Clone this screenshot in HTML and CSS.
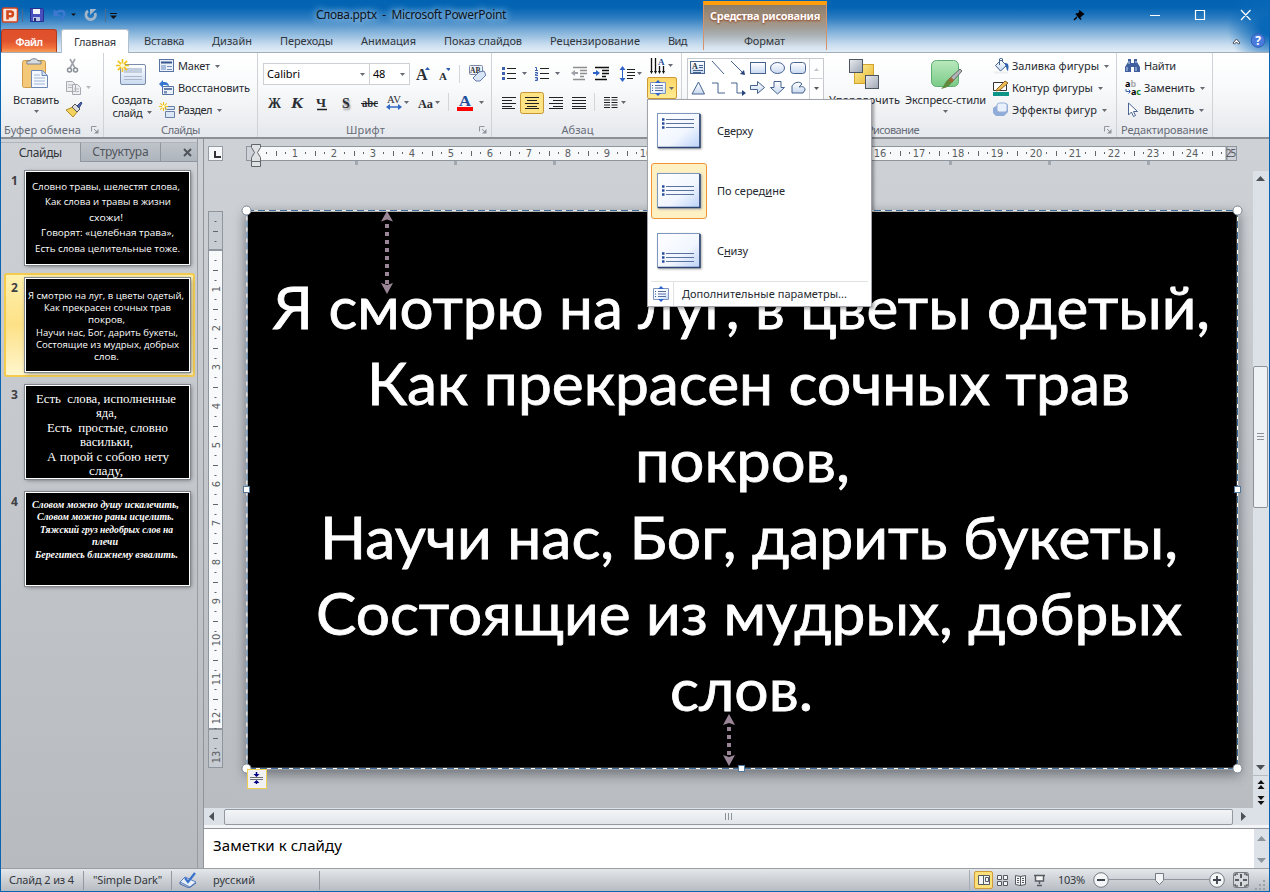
FILE: index.html
```html
<!DOCTYPE html>
<html lang="ru">
<head>
<meta charset="utf-8">
<title>Слова.pptx - Microsoft PowerPoint</title>
<link rel="stylesheet" href="styles.css">
</head>
<body>
<svg class="defs" width="0" height="0">
  <defs>
    <linearGradient id="page" x1="0" y1="0" x2="1" y2="1"><stop offset="0" stop-color="#fff"/><stop offset=".6" stop-color="#f1f6ff"/><stop offset="1" stop-color="#bcd2f8"/></linearGradient>
    <linearGradient id="blue" x1="0" y1="0" x2="0" y2="1"><stop offset="0" stop-color="#fff"/><stop offset="1" stop-color="#c9d9f0"/></linearGradient>
    <linearGradient id="gold" x1="0" y1="0" x2="1" y2="1"><stop offset="0" stop-color="#fff0a0"/><stop offset="1" stop-color="#e5b52b"/></linearGradient>
    <linearGradient id="green" x1="0" y1="0" x2="0" y2="1"><stop offset="0" stop-color="#b9e8bd"/><stop offset="1" stop-color="#7acb88"/></linearGradient>
    <linearGradient id="steel" x1="0" y1="0" x2="1" y2="1"><stop offset="0" stop-color="#e9ebee"/><stop offset="1" stop-color="#9da6b5"/></linearGradient>
    <symbol id="down" viewBox="0 0 5 3"><path d="M0 0h5L2.500 3z" fill="#666b72"/></symbol>
    <symbol id="launch" viewBox="0 0 8 8"><path d="M.5 5.500V.5H5.500M3 3l3 3" fill="none" stroke="#8f969e"/><path d="M7.500 3v4.500H3z" fill="#8f969e"/></symbol>
    <symbol id="spark" viewBox="0 0 14 14"><path d="M7 0v14M0 7h14M2 2l10 10M12 2L2 12" stroke="#f2c21a" stroke-width="1.700"/><circle cx="7" cy="7" r="2.500" fill="#fffbd2"/></symbol>
    <symbol id="valign" viewBox="0 0 16 16"><path d="M.5 2.500h15v11H.5z" fill="url(#page)" stroke="#7f97c0"/><path d="M5 5.500h8M5 8h8M5 10.500h8" stroke="#5a6f9c"/><path d="M2 5.500h1M2 8h1M2 10.500h1" stroke="#2c52a8"/><path d="M8 0l3 3H5zM8 16l3-3H5z" fill="#2c63cf"/></symbol>
  </defs>
</svg>
<div class="window">

  <header class="titlebar">
    <div class="quick">
      <svg width="120" height="20" viewBox="0 5 120 20">
        <rect x="2.500" y="8" width="15" height="14" rx="1.500" fill="#fbe4dc" stroke="#d0441c" stroke-width="1.500"/><path d="M7.500 19.500V11.500h3a2.300 2.300 0 0 1 0 4.800H8" fill="none" stroke="#d1481d" stroke-width="2.600"/>
        <path d="M22.500 9v13M105.500 9v13" stroke="#4d6c8f"/>
        <path d="M30.500 8.500h12l1 1V21.500H30.500z" fill="#4a4fc0" stroke="#26308e"/><path d="M33 9h7v5h-7z" fill="#f3f5fb"/><path d="M33 17h7v4h-7z" fill="#b9c3e5"/><path d="M34 18h2v3h-2z" fill="#222a70"/>
        <path d="M54.500 10v5.500h5.500M55 15c2.500-5 9-5.500 9.500-1 0 2.500-2 4-4 6" fill="none" stroke="#3f78d2" stroke-width="2.200"/>
        <path d="M71 13.500h5L73.500 16z" fill="#111"/>
        <path d="M88 11a4.700 4.700 0 1 0 7 2" fill="none" stroke="#a3b6ca" stroke-width="2.800"/><path d="M90 15V9h6.500z" fill="#a3b6ca"/>
        <path d="M110 13.500h7" stroke="#111"/><path d="M110 15.500h7l-3.500 3.500z" fill="#111"/>
      </svg>
    </div>
    <h1 class="doc" data-w="190">Слова.pptx&nbsp; -&nbsp; Microsoft PowerPoint</h1>
    <svg class="winbtns" width="190" height="24" viewBox="1070 3 190 24">
      <path d="M1074 20l3-3M1076 13.500l5 6M1077 14.500l3.500-2.500 2 2.500-2.500 2.500zM1079 10.500l5 4" stroke="#000" stroke-width="1.500" fill="#000"/>
      <path d="M1150 15.500h10M1195.500 10.500h9v9h-9zM1241 10l9.500 10M1250.500 10l-9.500 10" stroke="#fff" stroke-width="1.200" fill="none"/>
    </svg>
  </header>

  <nav class="tabs">
    <span class="tab file"><b data-w="27">Файл</b></span>
    <span class="tab home"><b data-w="42">Главная</b></span>
    <b data-w="40">Вставка</b><b data-w="40">Дизайн</b><b data-w="53">Переходы</b><b data-w="55">Анимация</b><b data-w="78">Показ слайдов</b><b data-w="90">Рецензирование</b><b data-w="19">Вид</b>
    <span class="format"><b data-w="41">Формат</b></span>
    <svg class="help" width="36" height="18" viewBox="1231 32 36 18">
      <path d="M1233 43l3.500-4 3.500 4-1.500 1-2-2-2 2z" fill="#fff" stroke="#444c57"/>
      <circle cx="1258" cy="40.500" r="6.800" fill="#4a7bdc" stroke="#2f5fb8"/><text x="1258" y="45" text-anchor="middle" class="q">?</text>
    </svg>
  </nav>
  <div class="context"><span data-w="110">Средства рисования</span></div>

  <section class="ribbon">
    <div class="group clip">
      <div class="body">
        <div class="big paste">
          <svg width="30" height="32" viewBox="22 58 30 32"><rect x="23.500" y="60.500" width="23" height="27" rx="2" fill="#f3c878" stroke="#d09a48"/><path d="M28 64v-3h3c0-3 8-3 8 0h3v3z" fill="#d9dde3" stroke="#77808d"/><path d="M32.500 70.500h11l5 5v12h-16z" fill="#f5f9ff" stroke="#6d88b2"/><path d="M43 70.500v5h5" fill="#cfdff5" stroke="#6d88b2"/><path d="M35 75h6M35 78h11M35 81h11M35 84h11" stroke="#9fb4d6"/></svg>
          <span data-w="46">Вставить</span>
          <svg width="5" height="3"><use href="#down"/></svg>
        </div>
        <div class="col icons">
          <svg width="20" height="16" viewBox="0 0 20 16"><path d="M4 1l5 9M9 1L4 10" stroke="#a0a4aa" stroke-width="1.600"/><circle cx="3.500" cy="12" r="2" fill="none" stroke="#8a9098" stroke-width="1.500"/><circle cx="9.500" cy="12" r="2" fill="none" stroke="#8a9098" stroke-width="1.500"/></svg>
          <svg width="26" height="16" viewBox="0 0 26 16"><path d="M.5 1.500h6l3 3v7h-9zM6.500 4.500h5l3 3v7h-8z" fill="#eceef0" stroke="#a7abb1"/><path d="M2 5h4M2 7.500h4M8 9h5M8 11.500h5" stroke="#b5b9be"/><path d="M20 6h5l-2.500 3z" fill="#b7babf"/></svg>
          <svg width="20" height="16" viewBox="0 0 20 16"><path d="M0 8l7-3 5 4-5 6z" fill="#f1d35e" stroke="#b38b24"/><path d="M6 5l3-3 5 5-3 3z" fill="#ddd" stroke="#555"/><path d="M11 4l4-4 1 1-3 5z" fill="#4b64aa" stroke="#334883"/></svg>
        </div>
      </div>
      <div class="caption"><span data-w="77">Буфер обмена</span><svg width="8" height="8"><use href="#launch"/></svg></div>
    </div>

    <div class="group slides">
      <div class="body">
        <div class="big newslide">
          <svg width="32" height="30" viewBox="115 59 32 30"><rect x="119.500" y="65.500" width="25" height="20" rx="1.500" fill="url(#blue)" stroke="#7a8ca8"/><path d="M123 69h18v5h-18z" fill="#c2cede"/><path d="M123 77.500h18M123 80.500h18" stroke="#aab7ca"/><use href="#spark" x="115" y="60" width="13" height="13"/></svg>
          <span data-w="41">Создать</span>
          <span class="inline"><span data-w="30">слайд</span><svg width="5" height="3"><use href="#down"/></svg></span>
        </div>
        <div class="col rows">
          <div><svg width="16" height="16"><rect x=".5" y="1.500" width="14" height="12" fill="#eaf1fb" stroke="#5673a2"/><path d="M2 4.500h11" stroke="#38568d" stroke-width="2"/><path d="M2 7h5v5H2z" fill="#a8bddc"/><path d="M8 8.500h5M8 11.500h5" stroke="#7890b5"/></svg><span data-w="32">Макет</span><svg class="dd" width="5" height="3"><use href="#down"/></svg></div>
          <div><svg width="16" height="16"><path d="M3.500 6.500h11v8h-11z" fill="#eaf1fb" stroke="#5673a2"/><path d="M5 9h8" stroke="#38568d" stroke-width="1.500"/><path d="M5 11h3v2.500H5z" fill="#7890b5"/><path d="M0 4l4-4v2c5 0 6 2 6 5-1-2-3-2-6-2v3z" fill="#3676cf"/></svg><span data-w="72">Восстановить</span></div>
          <div><svg width="16" height="16"><path d="M6.500 4.500h9v3h-9zM6.500 9.500h9v6h-9z" fill="#dce7f6" stroke="#6981a9"/><use href="#spark" width="9" height="9"/></svg><span data-w="34">Раздел</span><svg class="dd" width="5" height="3"><use href="#down"/></svg></div>
        </div>
      </div>
      <div class="caption"><span data-w="39">Слайды</span></div>
    </div>

    <div class="group font">
      <div class="body stack">
        <div class="fontrow1">
          <div class="combo"><span data-w="33">Calibri</span><svg width="5" height="3"><use href="#down"/></svg></div>
          <div class="combo size"><span data-w="12">48</span><svg width="5" height="3"><use href="#down"/></svg></div>
          <svg width="36" height="22" viewBox="413 63 36 22"><text x="415" y="80" class="ser" font-size="16">A</text><path d="M424 70h5l-2.500-3zM445 68h5l-2.500 3z" fill="#2c5bb4"/><text x="438" y="80" class="ser" font-size="11">A</text></svg>
          <i class="rule"></i>
          <svg width="18" height="18" viewBox="467 66 18 18"><rect x="468.500" y="66.500" width="13" height="9" rx="1" fill="#eef3fb" stroke="#7888a5"/><text x="469" y="74" class="ser" font-size="7.500">AB</text><path d="M472 79l6-6 5-1 2 4-6 6h-4z" fill="#d8e5f7" stroke="#637bab"/></svg>
        </div>
        <svg class="fontrow2" width="224" height="24" viewBox="263 92 224 24">
          <text x="268" y="108" class="ser" font-size="14" textLength="13">Ж</text>
          <text x="291" y="108" class="ser it" font-size="14" textLength="12">К</text>
          <text x="316" y="107" class="ser" font-size="13" textLength="10">Ч</text><path d="M317 109.500h10" stroke="#222" stroke-width="1.500"/>
          <text x="342" y="108" class="ser shade" font-size="14">S</text>
          <text x="362" y="107" class="ser" font-size="12" textLength="16">abc</text><path d="M361 103.500h17" stroke="#222"/>
          <text x="387" y="103" class="ser thin" font-size="11" textLength="14">AV</text><path d="M388 107h13" stroke="#316ac5" stroke-width="1.500"/><path d="M386 107l4-3v6zM402 107l-4-3v6z" fill="#316ac5"/><use href="#down" x="404" y="101" width="5" height="3"/>
          <text x="418" y="108" class="ser" font-size="13" textLength="15">Aa</text><use href="#down" x="435" y="101" width="5" height="3"/>
          <path d="M448.500 93v18" stroke="#d3d6da"/>
          <text x="459" y="106" class="ser bluea" font-size="15" textLength="12">A</text><path d="M457 107h16v4h-16z" fill="#f00"/><use href="#down" x="479" y="101" width="5" height="3"/>
        </svg>
      </div>
      <div class="caption"><span data-w="39">Шрифт</span><svg width="8" height="8"><use href="#launch"/></svg></div>
    </div>

    <div class="group para">
      <div class="body">
        <div class="stack">
          <svg class="parow1" width="146" height="24" viewBox="498 62 146 24">
            <path d="M507 68.500h9M507 73.500h9M507 78.500h9M540 68.500h9M540 73.500h9M540 78.500h9" stroke="#222"/>
            <path d="M502 67h3v3h-3zM502 72h3v3h-3zM502 77h3v3h-3z" fill="#3c62b0"/><path d="M535 67.500h1.500v3M535 70.500h3M535 72.500h2.500v1.500h-2v1.500h2.500M535 77.500h2.500v3H535M535.500 79h2" fill="none" stroke="#3c62b0"/>
            <use href="#down" x="522" y="72" width="5" height="3"/><use href="#down" x="555" y="72" width="5" height="3"/>
            <path d="M573 67.500h14M580 70.500h7M580 73.500h7M580 76.500h4M573 79.500h12" stroke="#8f8f8f" stroke-width="1.400"/><path d="M571 73l4-3v2h3v2h-3v2z" fill="#9da1a7"/>
            <path d="M595 67.500h14M602 70.500h7M602 73.500h7M602 76.500h4M595 79.500h12" stroke="#111" stroke-width="1.400"/><path d="M600 73l-4-3v2h-3v2h3v2z" fill="#2d63c8"/>
            <path d="M627 69.500h8M627 72.500h8M627 75.500h8M627 78.500h6" stroke="#222"/><path d="M622.500 68v12" stroke="#2d63c8"/><path d="M619.500 70l3-4 3 4zM619.500 78l3 4 3-4z" fill="#2d63c8"/><use href="#down" x="637" y="72" width="5" height="3"/>
          </svg>
          <svg class="parow2" width="132" height="24" viewBox="498 91 132 24">
            <rect x="520.500" y="92.500" width="23" height="21" rx="2" fill="#fde383" stroke="#c79733"/>
            <path d="M502 97.500h14M502 100.500h10M502 103.500h14M502 106.500h10M502 108.500h13M525 97.500h14M527 100.500h10M525 103.500h14M527 106.500h10M525 108.500h14M549 97.500h14M553 100.500h10M549 103.500h14M553 106.500h10M549 108.500h14M572 97.500h14M572 100.500h14M572 103.500h14M572 106.500h14M572 108.500h14" stroke="#222"/>
            <path d="M594.500 93v18" stroke="#d3d6da"/>
            <path d="M604 97.500h6M604 100h6M604 102.500h6M604 105h6M604 107.500h6M611.500 97.500h6M611.500 100h6M611.500 102.500h6M611.500 105h6M611.500 107.500h6" stroke="#222"/><use href="#down" x="621" y="101" width="5" height="3"/>
          </svg>
        </div>
        <div class="dircol">
          <svg width="30" height="22" viewBox="647 55 30 22"><path d="M651.500 58v14M655.500 58v14M659.500 66v6M663.500 66v6" stroke="#111" stroke-width="1.300"/><path d="M650 71h3l-1.500 3zM654 71h3l-1.500 3zM658 71h3l-1.500 3zM662 71h3l-1.500 3z" fill="#111"/><text x="658" y="65" class="ser bluea" font-size="9">A</text><use href="#down" x="668" y="64" width="5" height="3"/></svg>
          <div class="hot"><svg width="16" height="16"><use href="#valign"/></svg><svg width="5" height="3"><use href="#down"/></svg></div>
        </div>
      </div>
      <div class="caption"><span data-w="32">Абзац</span></div>
    </div>

    <div class="group draw">
      <div class="body">
        <svg class="gallery" width="138" height="42" viewBox="687 58 138 42">
          <rect x="687.500" y="58.500" width="136" height="45" fill="#fff" stroke="#c5c9ce"/>
          <path d="M809.500 59v41M809 78.500h15" stroke="#d0d4d8"/><path d="M814 71h5l-2.500-3z" fill="#c3c6ca"/><path d="M814 87h5l-2.500 3z" fill="#555"/>
          <g fill="url(#blue)" stroke="#46628f"><rect x="690.500" y="61.500" width="14" height="12"/><rect x="750.500" y="62.500" width="15" height="11"/><ellipse cx="777.500" cy="68" rx="7" ry="5.500"/><rect x="790.500" y="62.500" width="15" height="11" rx="3"/><path d="M698.500 82l6 12h-12.500z"/><path d="M750.500 85.500h7v-4l7 6-7 6v-4h-7z"/><path d="M774 81.500h7v6h3.500l-7 6.500-7-6.500h3.500z"/><path d="M792 93v-7c2-4 8-5 10-2l-3 3c4-1 6 0 6 3l-2 3z"/></g>
          <path d="M699 65.500h4M699 67.500h4M693 70.500h10M693 72.500h8M712 61l12 13M731 61l12 12M712 83h6v10h7M731 83h6v10h6" fill="none" stroke="#46628f"/><path d="M745 75l-5-1 4-4zM746 93l-4-3v6z" fill="#28457c"/><text x="692" y="69" class="ser" font-size="8">A</text>
        </svg>
        <div class="big arrange">
          <svg width="32" height="32" viewBox="849 57 32 32"><rect x="854.500" y="63.500" width="19" height="19" fill="url(#gold)" stroke="#d0a32d"/><rect x="849.500" y="58.500" width="13" height="13" fill="url(#steel)" stroke="#4d5563"/><rect x="865.500" y="74.500" width="13" height="13" fill="url(#steel)" stroke="#4d5563"/></svg>
          <span data-w="71">Упорядочить</span>
        </div>
        <div class="big styles">
          <svg width="32" height="32" viewBox="931 57 32 32"><rect x="932.500" y="59.500" width="27" height="26" rx="5" fill="url(#green)" stroke="#5cae70"/><path d="M961 68l2 2-10 11-3-3z" fill="#b2b5ba" stroke="#666"/><path d="M950 78l3 3c-2 4-6 6-11 7 4-4 4-8 8-10z" fill="#5f8a3d"/><path d="M949 79l4 3 2-3-3-3z" fill="#9b6a36"/></svg>
          <span data-w="81">Экспресс-стили</span>
          <svg width="5" height="3"><use href="#down"/></svg>
        </div>
        <div class="col rows">
          <div><svg width="16" height="16"><path d="M2.500 7.500L8 2l5.500 5.500-6 5.500z" fill="url(#blue)" stroke="#42618f"/><path d="M6.500 7V1c0-1 3-1 3 0v3" fill="none" stroke="#42618f"/><path d="M12 5c4 0 4 3 3 8-2-1-1-4-3-6z" fill="#2d60ad"/><path d="M1 13.500h14v2H1z" fill="#eee"/></svg><span data-w="87">Заливка фигуры</span><svg class="dd" width="5" height="3"><use href="#down"/></svg></div>
          <div><svg width="16" height="16"><path d="M.5 2.500h13v8H.5z" fill="#fff" stroke="#333"/><path d="M4 9l8-8 3 2-8 7-4 1z" fill="#eebd54" stroke="#8d6229"/><path d="M0 12h16v4H0z" fill="#0c9488"/></svg><span data-w="81">Контур фигуры</span><svg class="dd" width="5" height="3"><use href="#down"/></svg></div>
          <div><svg width="16" height="16"><path d="M3 4l3-3h7l2 2v7l-4 4H3l-3-3V6z" fill="#8fabd9"/><rect x="4" y="1" width="10" height="9" rx="2.500" fill="#e8f0fc" stroke="#9bb1d6"/></svg><span data-w="85">Эффекты фигур</span><svg class="dd" width="5" height="3"><use href="#down"/></svg></div>
        </div>
      </div>
      <div class="caption"><span data-w="52">Рисование</span><svg width="8" height="8"><use href="#launch"/></svg></div>
    </div>

    <div class="group edit">
      <div class="body">
        <div class="col rows">
          <div><svg width="16" height="16"><path d="M3 1h3v4h3V1h3v3l3 5v5H9V9H6v5H0V9l3-5z" fill="#3f5f9f"/><path d="M2 9v4M11 9v4M4 3v3M11 3v2" stroke="#c8d8f2"/></svg><span data-w="32">Найти</span></div>
          <div><svg class="swap" width="16" height="16"><text x="0" y="7" class="abac">a<tspan fill="#aaa">b</tspan></text><text x="6" y="15" class="abac" textLength="10">a<tspan fill="#138a2c">c</tspan></text><path d="M1 9v2.500h4M3.500 9.500l2 2-2 2" fill="none" stroke="#3a63b0"/></svg><span data-w="51">Заменить</span><svg class="dd" width="5" height="3"><use href="#down"/></svg></div>
          <div><svg width="16" height="16"><path d="M3.500 1v12l3-3 2 4.500 2-1-2-4h4z" fill="#fff" stroke="#4a6594"/></svg><span data-w="50">Выделить</span><svg class="dd" width="5" height="3"><use href="#down"/></svg></div>
        </div>
      </div>
      <div class="caption"><span data-w="87">Редактирование</span></div>
    </div>
  </section>

  <main class="work">
    <aside class="pane">
      <div class="panetabs">
        <span class="on"><b data-w="43">Слайды</b></span><span class="off"><b data-w="56">Структура</b></span><span class="off x"><svg width="9" height="9"><path d="M1 1l7 7M8 1L1 8" stroke="#4f545a" stroke-width="2"/></svg></span>
      </div>
      <div class="thumbs">
        <div class="slot"><span>1</span>
          <svg class="thumb sans" width="163" height="92" viewBox="26 172 163 92"><g><text x="32" y="190" textLength="148">Словно травы, шелестят слова,</text><text x="45" y="205" textLength="126">Как слова и травы в жизни</text><text x="89" y="221" textLength="34">схожи!</text><text x="41" y="236" textLength="133">Говорят: «целебная трава»,</text><text x="35" y="252" textLength="145">Есть слова целительные тоже.</text></g></svg></div>
        <div class="slot sel"><span>2</span>
          <svg class="thumb sans" width="163" height="92" viewBox="26 279 163 92"><g><text x="28" y="299" textLength="156">Я смотрю на луг, в цветы одетый,</text><text x="44" y="311" textLength="127">Как прекрасен сочных трав</text><text x="88" y="323" textLength="37">покров,</text><text x="36" y="336" textLength="142">Научи нас, Бог, дарить букеты,</text><text x="36" y="348" textLength="143">Состоящие из мудрых, добрых</text><text x="94" y="360" textLength="25">слов.</text></g></svg></div>
        <div class="slot"><span>3</span>
          <svg class="thumb serif" width="163" height="92" viewBox="26 386 163 92"><g><text x="36" y="403" textLength="140">Есть&nbsp; слова, исполненные</text><text x="96" y="417" textLength="21">яда,</text><text x="47" y="432" textLength="121">Есть&nbsp; простые, словно</text><text x="80" y="446" textLength="53">васильки,</text><text x="47" y="461" textLength="122">А порой с собою нету</text><text x="89" y="475" textLength="34">сладу,</text></g></svg></div>
        <div class="slot"><span>4</span>
          <svg class="thumb ital" width="163" height="92" viewBox="26 493 163 92"><g><text x="32" y="508" textLength="147">Словом можно душу искалечить,</text><text x="37" y="520" textLength="137">Словом можно раны исцелить.</text><text x="40" y="533" textLength="133">Тяжский груз недобрых слов на</text><text x="92" y="545" textLength="26">плечи</text><text x="35" y="558" textLength="143">Берегитесь ближнему взвалить.</text></g></svg></div>
      </div>
    </aside>

    <section class="editor">
      <div class="stage">
        <div class="hruler"><span class="tabsel"></span><svg id="hr" width="1000" height="28" viewBox="240 140 1000 28"></svg></div>
        <div class="vruler"><svg id="vr" width="18" height="560" viewBox="207 210 18 560"></svg></div>
        <div class="canvas">
          <svg width="1021" height="637" viewBox="232 171 1021 637">
            <defs><filter id="sh" x="-5%" y="-5%" width="110%" height="110%"><feGaussianBlur stdDeviation="6"/></filter></defs>
            <rect x="245" y="213" width="995" height="562" fill="#555a60" opacity=".7" filter="url(#sh)"/>
            <rect x="247" y="211" width="991" height="558"/>
            <g class="verse">
              <text x="273" y="329" textLength="937">Я смотрю на луг, в цветы одетый,</text>
              <text x="367" y="405" textLength="763">Как прекрасен сочных трав</text>
              <text x="635" y="482" textLength="215">покров,</text>
              <text x="320" y="559" textLength="858">Научи нас, Бог, дарить букеты,</text>
              <text x="316" y="635" textLength="866">Состоящие из мудрых, добрых</text>
              <text x="670" y="711" textLength="143">слов.</text>
            </g>
            <rect x="247" y="211" width="990.500" height="557.500" fill="none" stroke="#fff" stroke-width="1.400"/>
            <rect x="247" y="210.500" width="990.500" height="558" fill="none" stroke="#3d6c9d" stroke-dasharray="7 4"/>
            <g fill="#9b8697"><path d="M387 211l6 10.500-6-2-6 2zM387 294l6-11-6 2-6-2zM729 714l6 11-6-2-6 2zM729 766l6-11-6 2-6-2z"/></g>
            <path d="M387 224v60M729 727v29" stroke="#9b8697" stroke-width="4" stroke-dasharray="4 4"/>
            <g fill="#fff" stroke="#7b8793"><circle cx="246.500" cy="210.500" r="4.500"/><circle cx="1237.500" cy="210.500" r="4.500"/><circle cx="246.500" cy="768.500" r="4.500"/><circle cx="1237.500" cy="768.500" r="4.500"/><g stroke="#51789b"><rect x="243.500" y="486.500" width="6" height="6"/><rect x="1234.500" y="486.500" width="6" height="6"/><rect x="738.500" y="765.500" width="6" height="6"/></g></g>
            <rect x="247.500" y="769.500" width="19" height="19" fill="#f1f1f3" stroke="#efcf50"/><path d="M250 777.500h13M250 779.500h13" stroke="#6d7075"/><path d="M256.500 772v3M256.500 781v3" stroke="#000080" stroke-width="1.500"/><path d="M253.500 774h6l-3 3zM253.500 783h6l-3-3z" fill="#000080"/>
          </svg>
        </div>
        <div class="vscroll">
          <svg width="15" height="637" viewBox="1253 171 15 637"><path d="M1256 181h9l-4.500-5zM1256 765h9l-4.500 5z" fill="#4c5157"/><rect x="1253.500" y="366.500" width="14" height="141" rx="1.500" fill="#eff2f5" stroke="#8b9299"/><path d="M1257 433.500h7M1257 436.500h7M1257 439.500h7" stroke="#8b9299"/><path d="M1253 775.500h15" stroke="#b4bac1"/><path d="M1257.500 784h7l-3.500-4zM1257.500 789h7l-3.500-4zM1257.500 796h7l-3.500 4zM1257.500 801h7l-3.500 4z" fill="#111"/></svg>
        </div>
        <div class="hscroll"><svg width="6" height="9"><path d="M5 0v9L0 4.500z" fill="#4c5157"/></svg><span class="bar"><svg width="8" height="8"><path d="M.5 0v7M3.500 0v7M6.500 0v7" stroke="#8b9299"/></svg></span><svg width="6" height="9"><path d="M0 0v9l5-4.500z" fill="#4c5157"/></svg></div>
      </div>
      <div class="notes"><p data-w="129">Заметки к слайду</p><svg width="15" height="39"><path d="M3 12h9L7.500 7zM3 29h9l-4.500 5z" fill="#8b949d"/></svg></div>
    </section>
  </main>

  <footer class="status">
    <span class="s1"><b data-w="65">Слайд 2 из 4</b></span><span class="s2"><b data-w="69">"Simple Dark"</b></span>
    <span class="s3"><svg width="18" height="16"><path d="M1 10l5-5 11 5-6 5z" fill="#e7effa" stroke="#5a7fbf"/><path d="M1 10v2l9 4 7-5" fill="none" stroke="#466cae"/><path d="M6 6l3 4 7-9" fill="none" stroke="#3971cb" stroke-width="2.200"/></svg><b data-w="42">русский</b></span>
    <svg class="view" width="112" height="22" viewBox="968 869 112 22">
      <path d="M969.500 870v20" stroke="#a5abb2"/><rect x="974.500" y="871.500" width="18" height="17" rx="1.500" fill="#fde07a" stroke="#cf9a3a"/>
      <g fill="#f5f5f5" stroke="#555b62"><path d="M978.500 875.500h11v9h-11zM985.500 877.500h3v4h-3zM983.500 876v9"/><path d="M997.500 875.500h4v4h-4zM1003.500 875.500h4v4h-4zM997.500 881.500h4v4h-4zM1003.500 881.500h4v4h-4z"/><path d="M1015.500 875.500l5 1 5-1v9l-5 1-5-1zM1020.500 876v10M1017 878.500h2M1017 880.500h2M1017 882.500h2M1022 878.500h2M1022 880.500h2M1022 882.500h2"/><path d="M1034 875.500h11M1035.500 876v5h8v-5M1039.500 881v3M1037 885.500h5" stroke-width="1.400"/></g>
    </svg>
    <b class="pct" data-w="27">103%</b>
    <svg class="zoom" width="174" height="22" viewBox="1092 869 174 22">
      <path d="M1109 879.500h100" stroke="#8d949c"/><g fill="#f4f5f7" stroke="#747b83"><circle cx="1101" cy="880" r="7.300"/><circle cx="1217" cy="880" r="7.300"/><path d="M1155.500 873.500h8v7l-4 4-4-4z"/><rect x="1233.500" y="872.500" width="15" height="15" rx="2" fill="#d6d9dd"/></g>
      <path d="M1097 880h8M1213 880h8M1217 876v8" stroke="#3f454c" stroke-width="1.800"/><path d="M1241 874v4M1241 882v4M1235 880h4M1243 880h4" stroke="#333" stroke-width="1.500"/><path d="M1235 876v-2h3M1244 874h3v2M1235 884v2h3M1244 886h3v-2" fill="none" stroke="#333"/>
      <path d="M1263 881h2M1259 885h2M1263 885h2M1255 889h2M1259 889h2M1263 889h2" stroke="#9aa0a7" stroke-width="2"/>
    </svg>
  </footer>

  <div class="menu">
    <div class="opt"><span class="pic"><svg width="46" height="38"><rect x="1.500" y="1.500" width="42" height="34" fill="url(#page)" stroke="#7d97be"/><path d="M2 35.500h42V2" fill="none" stroke="#2b4472" stroke-width="1.500"/><path d="M10 7.500h28M10 11.500h28M10 15.500h28" stroke="#5b729f"/><path d="M6 7.500h2.500M6 11.500h2.500M6 15.500h2.500" stroke="#2a4e9c" stroke-width="2.500"/></svg></span><span data-w="36">С<u>в</u>ерху</span></div>
    <div class="opt cur"><span class="pic"><svg width="46" height="38"><rect x="1.500" y="1.500" width="42" height="34" fill="url(#page)" stroke="#7d97be"/><path d="M2 35.500h42V2" fill="none" stroke="#2b4472" stroke-width="1.500"/><path d="M10 14.500h28M10 18.500h28M10 22.500h28" stroke="#5b729f"/><path d="M6 14.500h2.500M6 18.500h2.500M6 22.500h2.500" stroke="#2a4e9c" stroke-width="2.500"/></svg></span><span data-w="68">По серед<u>и</u>не</span></div>
    <div class="opt"><span class="pic"><svg width="46" height="38"><rect x="1.500" y="1.500" width="42" height="34" fill="url(#page)" stroke="#7d97be"/><path d="M2 35.500h42V2" fill="none" stroke="#2b4472" stroke-width="1.500"/><path d="M10 21.500h28M10 25.500h28M10 29.500h28" stroke="#5b729f"/><path d="M6 21.500h2.500M6 25.500h2.500M6 29.500h2.500" stroke="#2a4e9c" stroke-width="2.500"/></svg></span><span data-w="31">С<u>н</u>изу</span></div>
    <div class="more"><span class="ico"><svg width="16" height="16"><use href="#valign"/></svg></span><span data-w="165"><u>Д</u>ополнительные параметры...</span></div>
  </div>
</div>
<script src="script.js"></script>
</body>
</html>
```

FILE: styles.css
```css
* { box-sizing: border-box; }
body { margin: 0; overflow: hidden; font: 11px/14px "Noto Sans", "Open Sans", sans-serif; color: #262a30; }
b { font-weight: normal; }
svg { display: block; flex: none; }
.defs { position: absolute; }
[data-w] { white-space: nowrap; flex: none; }
.window { position: relative; width: 1270px; height: 892px; display: flex; flex-direction: column; border: 1px solid #0a64b1; border-top: 0;
  background: radial-gradient(ellipse 42px 42px at 100% 26px, #0a68b8 20%, transparent), linear-gradient(#0363b3 0, #0565b4 8px, #2d7dc1 18px, #83b2da 32px, #cadef0 45px, #e2edf6 52px) no-repeat 0 0 / 100% 52px; }

.titlebar { height: 28px; display: flex; align-items: center; padding-top: 2px; }
.quick { width: 315px; }
.quick svg { margin-left: -1px; }
.doc { margin: 0; font: 12px/16px "Noto Sans", sans-serif; color: #0b1420; text-shadow: 0 0 6px #b9d6f0, 0 0 8px #b9d6f0; }
.winbtns { margin-left: auto; margin-right: 9px; }

.tabs { height: 24px; display: flex; gap: 28px; line-height: 26px; color: #30353c; position: relative; z-index: 1; }
.tab { height: 24px; text-align: center; display: flex; justify-content: center; }
.file { width: 56px; background: linear-gradient(#df4f2b, #e0532c 50%, #f0703b 80%, #f79b55); color: #fff; text-shadow: 0 0 1px #fff; border: 1px solid #b23a1b; border-bottom: 0; border-radius: 3px 3px 0 0; margin-top: 1px; height: 23px; line-height: 23px; }
.home { width: 68px; background: #fff; border: 1px solid #b2bfcc; border-bottom: 0; border-radius: 3px 3px 0 0; margin: 1px -13px 0 -24px; line-height: 24px; }
.format { margin-left: 29px; }
.help { margin: 4px 2px 0 auto; }
.q { font: bold 12px "Noto Sans", sans-serif; fill: #fff; }
.context { position: absolute; left: 702px; top: 1px; width: 124px; height: 49px; border-top: 4px solid #ff9e0c; border-left: 1px solid #d5936c; border-right: 1px solid #d5936c; background: linear-gradient(#8c7c6c, #a5937f 35%, rgba(224,232,238,.4) 95%); color: #fff; font-weight: bold; display: flex; justify-content: center; padding-top: 4px; text-shadow: 0 1px 2px #8d3b1e; }

.ribbon { height: 87px; display: flex; background: linear-gradient(#fff, #f9fafb 40%, #eceef1 80%, #e5e8ec); border-top: 1px solid #a4aebb; border-bottom: 2px solid #8b9097; }
.group { display: flex; flex-direction: column; border-right: 1px solid #cfd3d8; position: relative; }
.body { display: flex; height: 70px; }
.stack { display: flex; flex-direction: column; }
.caption { display: flex; align-items: center; justify-content: center; color: #676c78; height: 13px; }
.caption svg { margin-left: auto; margin-right: 4px; }
.clip { width: 103px; } .slides { width: 154px; } .font { width: 234px; } .para { width: 190px; } .draw { width: 435px; } .edit { width: 96px; }
.clip .caption { padding-left: 3px; }
.font .caption span { margin-left: 88px; }
.para .caption { padding-right: 18px; }
.draw .caption span { margin-left: 185px; }
.big { display: flex; flex-direction: column; align-items: center; }
.big > svg:first-child { margin-top: 5px; }
.paste { width: 46px; margin-left: 12px; }
.paste > span { margin-top: 3px; } .paste > svg:last-child { margin-top: 3px; }
.newslide { width: 44px; margin-left: 6px; line-height: 13px; }
.newslide > svg { height: 30px; } .newslide > span { margin-top: 5px; }
.newslide .inline { display: flex; align-items: center; gap: 4px; margin-top: 0; }
.col { padding-top: 2px; display: grid; grid-auto-rows: 22px; align-items: center; align-content: start; }
.icons { margin-left: 7px; }
.rows > div { display: flex; align-items: center; gap: 3px; }
.rows .dd { margin-left: 2px; }
.slides .rows { margin-left: 5px; }
.fontrow1 { display: flex; align-items: center; margin: 10px 0 0 5px; height: 22px; }
.combo { width: 107px; height: 22px; border: 1px solid #cdd1d6; background: #fff; display: flex; align-items: center; justify-content: space-between; padding: 0 4px 0 3px; color: #000; }
.combo.size { width: 41px; margin-left: -1px; }
.fontrow1 > svg { margin-left: 4px; } .rule { width: 1px; height: 18px; background: #d3d6da; margin: 0 4px 0 9px; }
.fontrow2 { margin: 7px 0 0 5px; }
.ser { font-family: "Liberation Serif", serif; font-weight: bold; fill: #2b2e33; }
.it { font-style: italic; } .thin { font-weight: normal; } .shade { text-shadow: 1px 2px 2px #888; } .bluea { fill: #234f9c; }
.parow1 { margin: 9px 0 0 6px; } .parow2 { margin: 5px 0 0 6px; }
.dircol { margin-left: 3px; padding-top: 2px; }
.hot { width: 30px; height: 22px; display: flex; align-items: center; justify-content: center; gap: 3px; border: 1px solid #cc9a35; border-radius: 2px; background: linear-gradient(#fdd665, #ffeb93); }
.gallery { margin: 5px 0 0 5px; }
.arrange { width: 71px; margin-left: 4px; } .arrange > span, .styles > span { margin-top: 3px; }
.styles { width: 81px; margin-left: 5px; } .styles > svg:last-child { margin-top: 3px; }
.draw .rows { margin-left: 7px; } .edit .rows { margin-left: 8px; }
.abac { font: bold 9px "Noto Sans", sans-serif; }
.swap { overflow: visible; }

.work { flex: 1; display: flex; min-height: 0; background: linear-gradient(#ced1d6, #b7bbc0); }
.pane { width: 197px; border-right: 1px solid #989da4; }
.panetabs { display: flex; height: 24px; padding-top: 3px; font-size: 12px; }
.panetabs span { display: flex; justify-content: center; align-items: center; height: 20px; border-top: 1px solid #aeb4ba; }
.on { width: 79px; color: #33373c; }
.off { width: 81px; background: linear-gradient(#bec3ca, #afb5bd); border: 1px solid #8f969e; border-right: 0; color: #50555c; }
.off.x { width: 37px; padding-left: 16px; }
.thumbs { display: flex; flex-direction: column; gap: 3px; padding: 3px 2px 0 3px; }
.slot { height: 104px; display: flex; padding: 4px 0 0 5px; border: 1px solid transparent; border-radius: 3px; }
.slot > span { width: 15px; font: bold 12px/20px "Noto Sans", sans-serif; color: #3e4044; padding-left: 1px; }
.sel { border: 2px solid #f3cb4d; padding: 3px 0 0 4px; background: linear-gradient(#fff1ae, #fde187 50%, #fff6cd); }
.thumb { box-sizing: content-box; background: #000; border: 1px solid #fff; outline: 1px solid #82878d; box-shadow: 1px 1px 4px #666; }
.thumb text { fill: #fff; }
.sans text { font: 9.800px "Open Sans", sans-serif; }
.serif text { font: 13px "Liberation Serif", serif; }
.ital text { font: italic bold 10.500px "Liberation Serif", serif; }
.editor { width: 1066px; margin-left: 5px; border-left: 1px solid #8e959d; display: flex; flex-direction: column; }
.stage { display: grid; height: 686px; grid-template-columns: 28px 1021px 16px; grid-template-rows: 32px 637px 17px; border-bottom: 1px solid #8e959d; }
.hruler { grid-column: 1 / 4; display: flex; gap: 17px; padding: 1px 0 0 4px; }
.tabsel { width: 15px; height: 15px; margin-top: 6px; background: #f7f8f9; border: 1px solid #969ca4; display: flex; padding: 4px 0 0 5px; }
.tabsel::after { content: ""; width: 5px; height: 5px; border: solid #333; border-width: 0 0 2px 2px; }
.vruler { padding: 39px 0 0 3px; }
.rn { font: 11px "DejaVu Sans Condensed", sans-serif; fill: #5a5e63; text-anchor: middle; }
.canvas { overflow: hidden; background: linear-gradient(#cdd0d5, #b9bcc1); }
.verse text { font: 58.500px Lato, "Open Sans", sans-serif; fill: #fff; stroke: #fff; stroke-width: .8px; }
.vscroll { background: #dce1e7; }
.hscroll { grid-column: 1 / 4; background: #dce1e7; display: flex; align-items: center; padding: 0 22px 0 5px; }
.bar { flex: 1; height: 16px; margin: 0 8px 0 9px; border: 1px solid #9299a1; border-radius: 2px; background: linear-gradient(#f3f5f8, #e1e5ea); display: flex; justify-content: center; align-items: center; }
.notes { flex: 1; margin-top: 3px; border-top: 1px solid #8e959d; background: #fff; display: flex; justify-content: space-between; box-shadow: 0 -3px #f2f4f6; }
.notes p { margin: 7px 0 0 9px; font: 15px/18px "Noto Sans", sans-serif; color: #000; }
.notes svg { background: #dde2e8; }

.status { height: 23px; border-top: 1px solid #999ea4; background: linear-gradient(#e4e7ea, #cdd1d6 50%, #b7bcc2); display: flex; align-items: center; color: #33383e; }
.status > span { height: 19px; display: flex; align-items: center; border-right: 1px solid #92989f; }
.s1 { width: 83px; padding-left: 8px; } .s2 { width: 88px; padding-left: 9px; } .s3 { width: 148px; padding-left: 7px; gap: 16px; }
.view { margin-left: auto; margin-right: -22px; } .pct { margin-right: 7px; position: relative; } .zoom { margin-right: 3px; }

.menu { position: absolute; left: 646px; top: 99px; width: 225px; height: 208px; background: #fff; border: 1px solid #a0a4aa; box-shadow: 2px 2px 3px rgba(0,0,0,.35); padding: 1px 3px 0; display: flex; flex-direction: column; z-index: 3; }
.opt { height: 60px; display: flex; align-items: center; gap: 10px; flex: none; }
.pic { width: 56px; height: 56px; display: flex; align-items: center; justify-content: center; border: 1px solid transparent; border-radius: 3px; }
.pic svg { filter: drop-shadow(1px 1px 1px #aaa); }
.cur .pic { border-color: #f29436; background: #fdf0c3; }
.more { display: flex; align-items: center; height: 25px; border-top: 1px solid #e0e2e4; }
.ico { width: 23px; height: 24px; border-right: 1px solid #e0e2e4; padding: 4px 0 0 2px; margin-right: 8px; }
```

FILE: script.js
```js
// Labels are laid out for Segoe UI metrics: data-w holds the label width in pixels.
document.querySelectorAll('[data-w]').forEach(function (el) {
  var want = +el.dataset.w;
  el.style.letterSpacing = '0';
  var r = document.createRange();
  r.selectNodeContents(el);
  var natural = r.getBoundingClientRect().width;
  el.style.letterSpacing = ((want - natural) / el.textContent.length) + 'px';
});
document.querySelectorAll('text[textLength]').forEach(function (t) {
  t.setAttribute('lengthAdjust', 'spacingAndGlyphs');
});

// Rulers: one centimetre is 39px, with a dot at each quarter and a dash at each half.
var CM = 39;
function rulerH() {
  var s = '<rect x="246.5" y="146.500" width="990" height="14" fill="#cfd3d9" stroke="#8e959c"/>' +
    '<rect x="256" y="147" width="970" height="13" fill="#f8f9fa"/><path d="M1226.500 147v13" stroke="#8e959c" stroke-width="2"/>';
  for (var i = 0; i < 25; i++) {
    var x = 256 + i * CM;
    if (i) s += '<text class="rn" x="' + x + '" y="157">' + i + '</text>';
    s += '<path d="M' + (x + 10.500) + ' 152v2M' + (x + 20.500) + ' 151v5M' + (x + 29.500) + ' 152v2" stroke="#60656b"/>';
  }
  s += '<text class="rn" x="1231" y="157" textLength="11">25</text>';
  for (var k = 0; k < 9; k++) s += '<path d="M' + (355 + k * 99) + ' 161h3v4h-3z" fill="#a3a8ae"/>';
  s += '<path d="M251.500 144.500h9v3l-3 5 3 5v9h-9v-9l3-5-3-5zM251 161.500h9" fill="#dfe1e3" stroke="#60656b"/>';
  return s;
}
function rulerV() {
  var s = '<rect x="208.500" y="211.500" width="14" height="556" fill="#c7ccd2" stroke="#8e959c"/>' +
    '<rect x="209" y="250" width="13" height="478" fill="#f8f9fa"/><path d="M209 250h13M209 729h13" stroke="#8e959c" stroke-width="2"/>';
  for (var i = -1; i < 14; i++) {
    var y = 250 + i * CM;
    if (i > 0) s += '<text class="rn" transform="translate(220 ' + y + ') rotate(-90)">' + i + '</text>';
    if (i < 13) s += '<path d="M214.500 ' + (y + 10.500) + 'h2M213 ' + (y + 20.500) + 'h5M214.500 ' + (y + 30.500) + 'h2" stroke="#60656b"/>';
  }
  return s;
}
document.getElementById('hr').innerHTML = rulerH();
document.getElementById('vr').innerHTML = rulerV();
```
